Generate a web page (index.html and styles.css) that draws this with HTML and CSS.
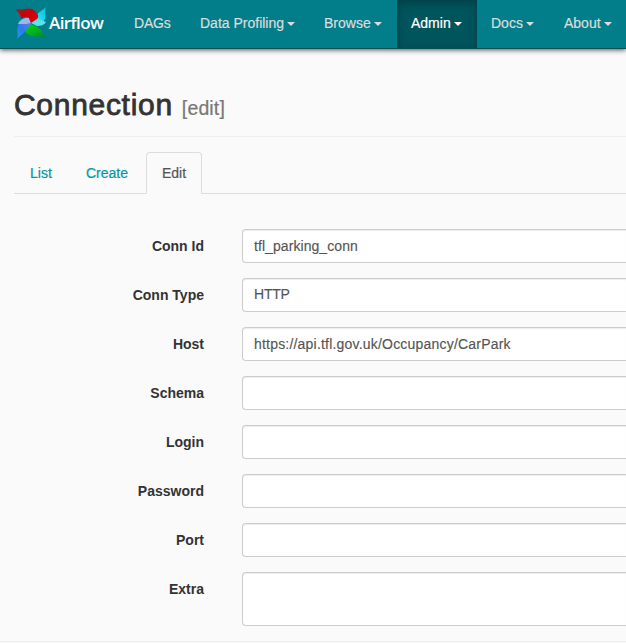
FILE: index.html
```html
<!DOCTYPE html>
<html lang="en">
<head>
<meta charset="utf-8">
<title>Airflow - Connection</title>
<link rel="stylesheet" href="styles.css">
</head>
<body>
<nav class="navbar">
  <a class="brand">
    <svg class="logo" width="32" height="34" viewBox="0 0 32 34">
      <defs>
        <linearGradient id="r" x1="0" y1="0" x2="1" y2="1"><stop offset="0" stop-color="#8d2420"/><stop offset=".4" stop-color="#c8000a"/><stop offset="1" stop-color="#e80010"/></linearGradient>
        <linearGradient id="g" x1="0" y1="0" x2="1" y2="1"><stop offset="0" stop-color="#00dc10"/><stop offset=".6" stop-color="#00a820"/><stop offset="1" stop-color="#047a34"/></linearGradient>
        <linearGradient id="b" x1="1" y1="0" x2="0" y2="1"><stop offset="0" stop-color="#5a88dc"/><stop offset=".6" stop-color="#3078ec"/><stop offset="1" stop-color="#12a0ff"/></linearGradient>
        <linearGradient id="c" x1="1" y1="0" x2="0" y2="1"><stop offset="0" stop-color="#08b8d0"/><stop offset=".5" stop-color="#18dcf0"/><stop offset="1" stop-color="#40e8f4"/></linearGradient>
      </defs>
      <path fill="url(#c)" d="M31 1 C29 6 31 9 30 13 L27 17 L16 17 L21 10 C23 6 27 5 31 1Z"/>
      <path fill="#62dfea" d="M16 17 L23 13 L31 16 C29 19 26 20 22 20Z"/>
      <path fill="url(#g)" d="M15 18 L21 20 C26 23 27 28 32 32 C25 29 18 33 10 26 L12 22Z"/>
      <path fill="url(#b)" d="M2 33 C4 28 1 25 3 20 C4 16 6 15 9 14 L16 17 L15 20 L10 25 C9 28 5 29 2 33Z"/>
      <path fill="#9fb4ea" d="M3 18 C5 13 11 11 14 12 L16 17 L11 18Z"/>
      <path fill="url(#r)" d="M0 3 C7 5 12 1 17 3 C22 6 25 10 22 13 L16 17 L14 12 C11 10 8 11 6 13 C6 8 3 6 0 3Z"/>
    </svg>
    <span class="brand-name">Airflow</span>
  </a>
  <ul class="menu">
    <li class="dags"><span class="label">DAGs</span></li>
    <li class="profiling"><span class="label">Data Profiling</span><i class="caret"></i></li>
    <li class="browse"><span class="label">Browse</span><i class="caret"></i></li>
    <li class="admin active"><span class="label">Admin</span><i class="caret"></i></li>
    <li class="docs"><span class="label">Docs</span><i class="caret"></i></li>
    <li class="about"><span class="label">About</span><i class="caret"></i></li>
  </ul>
</nav>
<main class="container">
  <h2 class="title">Connection <small>[edit]</small></h2>
  <ul class="tabs">
    <li class="list">List</li>
    <li class="create">Create</li>
    <li class="active">Edit</li>
  </ul>
  <form class="form">
    <div class="row"><label>Conn Id</label><div class="control">tfl_parking_conn</div></div>
    <div class="row"><label>Conn Type</label><div class="control select">HTTP</div></div>
    <div class="row"><label>Host</label><div class="control url">https://api.tfl.gov.uk/Occupancy/CarPark</div></div>
    <div class="row"><label>Schema</label><div class="control"></div></div>
    <div class="row"><label>Login</label><div class="control"></div></div>
    <div class="row"><label>Password</label><div class="control"></div></div>
    <div class="row"><label>Port</label><div class="control"></div></div>
    <div class="row"><label>Extra</label><div class="control area"></div></div>
  </form>
</main>
<hr class="rule">
</body>
</html>
```
FILE: styles.css
```css
* { box-sizing: border-box; }
body {
  margin: 0;
  height: 643px;
  overflow: hidden;
  background: #fafafa;
  color: #333;
  font: 14px/20px "Liberation Sans", Arial, sans-serif;
}
ul { list-style: none; margin: 0; padding: 0; }
.navbar {
  display: flex;
  height: 49px;
  background: #017e8a;
  border-bottom: 1px solid #044e56;
  box-shadow: 0 1px 5px rgba(0, 0, 0, .7);
}
.brand { display: flex; flex: none; width: 120px; padding: 6px 0 0 15px; color: #fff; }
.logo { display: block; flex: none; }
.brand-name {
  margin: 6px 0 0 2px;
  font: 600 17px/22px "Open Sans", sans-serif;
  letter-spacing: -.6px;
}
.menu { display: flex; color: #dcdcdc; -webkit-text-stroke: .2px; }
.menu li { display: flex; flex: none; align-items: center; height: 48px; padding: 0 0 2px 14px; white-space: nowrap; }
.dags { width: 66px; letter-spacing: -.2px; }
.profiling { width: 124px; }
.browse { width: 87px; }
.admin { width: 80px; }
.docs { width: 73px; }
.menu .active { background: #00545c; color: #fff; box-shadow: inset 0 3px 9px rgba(0, 0, 0, .25); }
.caret { margin: 1px 0 0 3px; border: 4px solid transparent; border-top-color: currentColor; border-bottom: 0; }
.container { padding-left: 14px; }
.title {
  margin: 0 0 15px;
  height: 88px;
  padding-top: 39px;
  border-bottom: 1px solid #eee;
  font-size: 30px;
  font-weight: 400;
  line-height: 33px;
  letter-spacing: .7px;
  -webkit-text-stroke: .8px #333;
}
.title small { font-size: 19.5px; color: #777; letter-spacing: .15px; -webkit-text-stroke: .2px #777; }
.tabs { display: flex; height: 42px; border-bottom: 1px solid #ddd; color: #0098a4; -webkit-text-stroke: .2px; }
.tabs li { height: 42px; padding: 11px 0 0 16px; margin-right: 2px; }
.tabs .list { width: 54px; }
.tabs .create { width: 74px; }
.tabs .active {
  width: 56px;
  padding: 10px 0 0 15px;
  border: 1px solid #ddd;
  border-bottom-color: #fafafa;
  border-radius: 4px 4px 0 0;
  background: #fafafa;
  color: #555;
}
.form { display: grid; gap: 15px; padding-top: 35px; }
.row { display: grid; grid-template-columns: 190px 1fr; column-gap: 38px; }
.row label { padding-top: 7px; text-align: right; font-weight: 700; }
.control {
  height: 34px;
  padding: 6px 0 6px 11px;
  border: 1px solid #ccc;
  border-right: 0;
  border-radius: 4px 0 0 4px;
  background: #fff;
  box-shadow: inset 0 1px 1px rgba(0, 0, 0, .075);
  color: #555;
  letter-spacing: .07px;
  -webkit-text-stroke: .15px;
}
.select { padding-top: 5px; letter-spacing: -.2px; }
.url { letter-spacing: .2px; }
.area { height: 54px; }
.rule { height: 1px; margin: 15px 0 0; border: 0; background: #eee; }
```
